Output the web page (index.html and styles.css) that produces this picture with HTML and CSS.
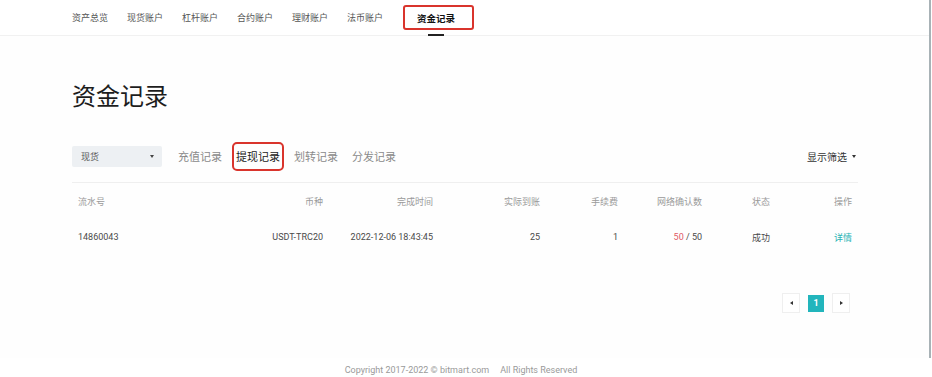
FILE: index.html
```html
<!DOCTYPE html>
<html lang="zh-CN">
<head>
<meta charset="utf-8">
<title>资金记录</title>
<link rel="stylesheet" href="styles.css">
</head>
<body>
<div class="frame">
  <nav class="topnav">
    <span class="nav-item">资产总览</span>
    <span class="nav-item">现货账户</span>
    <span class="nav-item">杠杆账户</span>
    <span class="nav-item">合约账户</span>
    <span class="nav-item">理财账户</span>
    <span class="nav-item">法币账户</span>
    <span class="nav-item nav-active">资金记录</span>
  </nav>
  <main class="content">
    <h1 class="title">资金记录</h1>
    <div class="toolbar">
      <div class="select"><span>现货</span><i class="caret-down"></i></div>
      <div class="tabs">
        <span class="tab">充值记录</span>
        <span class="tab tab-active">提现记录</span>
        <span class="tab">划转记录</span>
        <span class="tab">分发记录</span>
      </div>
      <div class="filter"><span>显示筛选</span><i class="caret-down dark"></i></div>
    </div>
    <div class="table">
      <div class="row head">
        <span class="c-left">流水号</span>
        <span class="c-right">币种</span>
        <span class="c-right">完成时间</span>
        <span class="c-right">实际到账</span>
        <span class="c-right">手续费</span>
        <span class="c-right">网络确认数</span>
        <span class="c-center">状态</span>
        <span class="c-right">操作</span>
      </div>
      <div class="row body">
        <span class="c-left num">14860043</span>
        <span class="c-right num">USDT-TRC20</span>
        <span class="c-right num">2022-12-06 18:43:45</span>
        <span class="c-right num">25</span>
        <span class="c-right num">1</span>
        <span class="c-right num"><em class="red">50</em> / 50</span>
        <span class="c-center">成功</span>
        <span class="c-right link">详情</span>
      </div>
    </div>
    <div class="pager">
      <span class="pg-btn"><i class="tri-left"></i></span>
      <span class="pg-num">1</span>
      <span class="pg-btn"><i class="tri-right"></i></span>
    </div>
  </main>
</div>
<footer class="footer">
  <span>Copyright 2017-2022 © bitmart.com</span><span>All Rights Reserved</span>
</footer>
</body>
</html>
```
FILE: styles.css
```css
* { box-sizing: border-box; }
html, body { margin: 0; padding: 0; background: #fff; }
body {
  width: 932px;
  height: 377px;
  overflow: hidden;
  font-family: "Noto Sans CJK SC", "Noto Sans", sans-serif;
  color: #333;
}
.frame {
  width: 931px;
  height: 358px;
  border-right: 2px solid #a8b2b6;
  background: #fefefe;
}
.topnav {
  height: 36px;
  display: flex;
  align-items: center;
  gap: 19px;
  padding-left: 72px;
  border-bottom: 1px solid #f1f1f1;
  background: #fff;
}
.nav-item {
  font-size: 9px;
  line-height: 12px;
  color: #555;
  white-space: nowrap;
}
.nav-active {
  position: relative;
  margin-left: 1px;
  height: 25px;
  display: flex;
  align-items: center;
  padding: 0 17px 0 12px;
  border: 2px solid #d9342c;
  border-radius: 3px;
  font-weight: 700;
  font-size: 9.5px;
  color: #111;
}
.nav-active::after {
  content: "";
  position: absolute;
  left: 50%;
  margin-left: -11px;
  bottom: -8px;
  width: 16px;
  height: 2px;
  background: #222;
}
.content {
  width: 786px;
  margin-left: 72px;
}
.title {
  margin: 47px 0 0;
  font-size: 24px;
  line-height: 24px;
  font-weight: 400;
  color: #1d1d1d;
}
.toolbar {
  margin-top: 35px;
  display: flex;
  align-items: center;
  height: 41px;
  padding-bottom: 11px;
  border-bottom: 1px solid #efefef;
}
.select {
  width: 90px;
  height: 21px;
  background: #edf0f3;
  border-radius: 2px;
  display: flex;
  align-items: center;
  justify-content: space-between;
  padding: 0 8px 0 9px;
  font-size: 9px;
  color: #555;
  margin-right: 14px;
}
.caret-down {
  display: inline-block;
  width: 0;
  height: 0;
  border-left: 2.5px solid transparent;
  border-right: 2.5px solid transparent;
  border-top: 3px solid #444;
}
.caret-down.dark { border-top-color: #333; margin-left: 5px; }
.tabs {
  display: flex;
  gap: 10px;
}
.tab {
  font-size: 11px;
  line-height: 15px;
  padding: 5px 2px;
  color: #8a8a8a;
  white-space: nowrap;
}
.tab-active {
  color: #222;
  outline: 2px solid #d9342c;
  border-radius: 3px;
}
.filter {
  margin-left: auto;
  display: flex;
  align-items: center;
  font-size: 10px;
  color: #333;
  padding-right: 2px;
}
.table { padding: 0 6px; }
.row {
  display: grid;
  grid-template-columns: 122px 123px 110px 107px 78px 84px 118px 32px;
  height: 36px;
  align-items: center;
  font-size: 9px;
  white-space: nowrap;
}
.row.head { color: #9a9a9a; }
.row.body { color: #4a4a4a; }
.num { font-family: Roboto, "Noto Sans CJK SC", sans-serif; font-size: 9px; }
.c-left { text-align: left; }
.c-right { text-align: right; }
.c-center { text-align: center; }
.red { font-style: normal; color: #e05a66; }
.link { color: #27b3b5; }
.pager {
  margin-top: 38px;
  display: flex;
  justify-content: flex-end;
  align-items: center;
  gap: 8px;
  padding-right: 8px;
}
.pg-btn {
  width: 18px;
  height: 20px;
  border: 1px solid #efefef;
  background: #fff;
  display: flex;
  align-items: center;
  justify-content: center;
}
.pg-num {
  width: 16px;
  height: 17px;
  background: #22b5bc;
  color: #fff;
  font-family: Roboto, sans-serif;
  font-size: 9px;
  font-weight: 700;
  display: flex;
  align-items: center;
  justify-content: center;
}
.tri-left, .tri-right {
  display: inline-block;
  width: 0;
  height: 0;
  border-top: 2.5px solid transparent;
  border-bottom: 2.5px solid transparent;
}
.tri-left { border-right: 3px solid #333; }
.tri-right { border-left: 3px solid #333; }
.footer {
  width: 922px;
  padding-top: 5px;
  display: flex;
  justify-content: center;
  gap: 11px;
  font-family: Roboto, "Noto Sans", sans-serif;
  font-size: 9px;
  line-height: 14px;
  color: #9a9a9a;
}
```
